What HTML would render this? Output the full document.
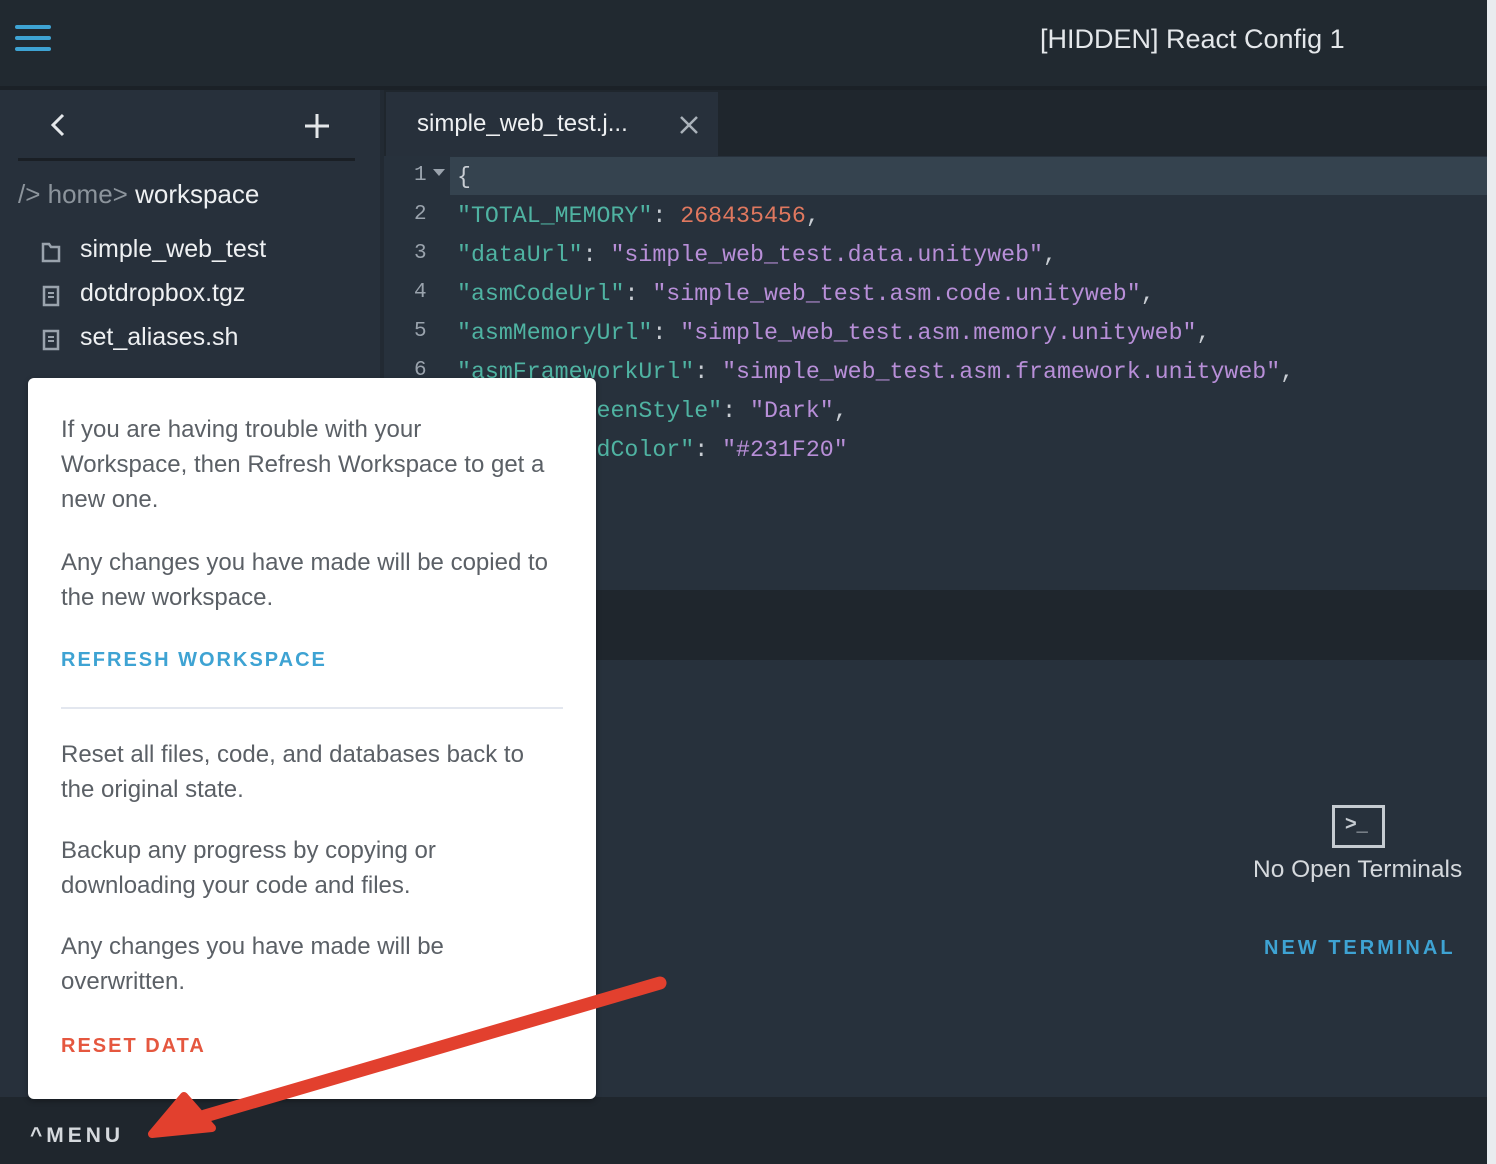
<!DOCTYPE html>
<html><head><meta charset="utf-8"><style>
*{margin:0;padding:0;box-sizing:border-box}
body{width:1496px;height:1164px;position:relative;overflow:hidden;background:#27303b;font-family:"Liberation Sans",sans-serif}
.abs{position:absolute}
.code{font-family:"Liberation Mono",monospace;font-size:23.25px;white-space:pre;color:#c9ced4}
.k{color:#4fb3a2}.s{color:#b88fd8}.n{color:#e0785f}
.ln{color:#9aa3ad;font-family:"Liberation Mono",monospace;font-size:21px}
.p{color:#5b6066;font-size:24px;line-height:35px;white-space:nowrap}
</style></head><body>
<div class="abs" style="left:0;top:0;width:1487px;height:88px;background:#212930"></div>
<div class="abs" style="left:0;top:86px;width:1487px;height:4px;background:#1b2127"></div>
<div class="abs" style="left:15px;top:25px;width:36px;height:4px;background:#3ea3d3;border-radius:2px"></div>
<div class="abs" style="left:15px;top:36px;width:36px;height:4px;background:#3ea3d3;border-radius:2px"></div>
<div class="abs" style="left:15px;top:47px;width:36px;height:4px;background:#3ea3d3;border-radius:2px"></div>
<div class="abs" style="left:1040px;top:24px;color:#e4e7ea;font-size:27px">[HIDDEN] React Config 1</div>
<div class="abs" style="left:1487px;top:0;width:9px;height:1164px;background:#e9ecef"></div>
<div class="abs" style="left:0;top:90px;width:380px;height:1010px;background:#27303b"></div>
<div class="abs" style="left:380px;top:90px;width:4px;height:1010px;background:#222a33"></div>
<svg class="abs" style="left:48px;top:112px" width="20" height="26"><path d="M15 3 L5 13 L15 23" stroke="#e4e7ea" stroke-width="3" fill="none"/></svg>
<svg class="abs" style="left:303px;top:112px" width="28" height="28"><path d="M14 2V26M2 14H26" stroke="#e4e7ea" stroke-width="3"/></svg>
<div class="abs" style="left:18px;top:158px;width:337px;height:3px;background:#1a1f25"></div>
<div class="abs" style="left:18px;top:179px;font-size:26px;color:#8c949c">/&gt; home&gt; <span style="color:#eef0f2">workspace</span></div>
<svg class="abs" style="left:40px;top:240px" width="22" height="24"><path d="M3 4H9L11 7H19V21H3Z" stroke="#9aa3ad" stroke-width="2.5" fill="none"/></svg>
<div class="abs" style="left:80px;top:235px;font-size:25px;color:#eef0f2">simple_web_test</div>
<svg class="abs" style="left:40px;top:284px" width="22" height="24"><rect x="4" y="3" width="14" height="18" stroke="#9aa3ad" stroke-width="2.5" fill="none"/><path d="M8 9H14M8 13H14" stroke="#9aa3ad" stroke-width="2"/></svg>
<div class="abs" style="left:80px;top:279px;font-size:25px;color:#eef0f2">dotdropbox.tgz</div>
<svg class="abs" style="left:40px;top:328px" width="22" height="24"><rect x="4" y="3" width="14" height="18" stroke="#9aa3ad" stroke-width="2.5" fill="none"/><path d="M8 9H14M8 13H14" stroke="#9aa3ad" stroke-width="2"/></svg>
<div class="abs" style="left:80px;top:323px;font-size:25px;color:#eef0f2">set_aliases.sh</div>
<div class="abs" style="left:384px;top:90px;width:1103px;height:66px;background:#1f262d"></div>
<div class="abs" style="left:386px;top:92px;width:332px;height:64px;background:#27303b"></div>
<div class="abs" style="left:417px;top:110px;font-size:24px;color:#eef0f2">simple_web_test.j...</div>
<svg class="abs" style="left:678px;top:114px" width="22" height="22"><path d="M3 3L19 19M19 3L3 19" stroke="#aab2ba" stroke-width="2.5"/></svg>
<div class="abs" style="left:384px;top:156px;width:1103px;height:434px;background:#27313c"></div>
<div class="abs" style="left:450px;top:157px;width:1037px;height:38px;background:#35434f"></div>
<div class="abs ln" style="left:414px;top:164px">1</div>
<svg class="abs" style="left:433px;top:169px" width="12" height="8"><path d="M0 0H12L6 7Z" fill="#9aa3ad"/></svg>
<div class="abs ln" style="left:414px;top:203px">2</div>
<div class="abs ln" style="left:414px;top:242px">3</div>
<div class="abs ln" style="left:414px;top:281px">4</div>
<div class="abs ln" style="left:414px;top:320px">5</div>
<div class="abs ln" style="left:414px;top:359px">6</div>
<div class="abs code" style="left:457px;top:158px;line-height:39px">{
<span class="k">"TOTAL_MEMORY"</span>: <span class="n">268435456</span>,
<span class="k">"dataUrl"</span>: <span class="s">"simple_web_test.data.unityweb"</span>,
<span class="k">"asmCodeUrl"</span>: <span class="s">"simple_web_test.asm.code.unityweb"</span>,
<span class="k">"asmMemoryUrl"</span>: <span class="s">"simple_web_test.asm.memory.unityweb"</span>,
<span class="k">"asmFrameworkUrl"</span>: <span class="s">"simple_web_test.asm.framework.unityweb"</span>,
<span class="k">"splashScreenStyle"</span>: <span class="s">"Dark"</span>,
<span class="k">"backgroundColor"</span>: <span class="s">"#231F20"</span></div>
<div class="abs" style="left:384px;top:590px;width:1103px;height:70px;background:#1f262d"></div>
<div class="abs" style="left:384px;top:660px;width:1103px;height:437px;background:#27313c"></div>
<div class="abs" style="left:1332px;top:805px;width:53px;height:43px;border:3px solid #c5cbd1"></div>
<div class="abs" style="left:1345px;top:813px;color:#c5cbd1;font-size:20px;font-weight:bold">&gt;_</div>
<div class="abs" style="left:1253px;top:856px;font-size:24.5px;color:#d5d9dd">No Open Terminals</div>
<div class="abs" style="left:1264px;top:937px;font-size:20px;color:#3ea3d3;font-weight:bold;letter-spacing:3px">NEW TERMINAL</div>
<div class="abs" style="left:0;top:1097px;width:1487px;height:67px;background:#1f262d"></div>
<div class="abs" style="left:30px;top:1124px;font-size:21px;color:#d5d9dd;font-weight:bold;letter-spacing:4px">^MENU</div>
<div class="abs" style="left:28px;top:378px;width:568px;height:721px;background:#fff;border-radius:6px;box-shadow:0 2px 6px rgba(0,0,0,.3)"></div>
<div class="abs p" style="left:61px;top:412px">If you are having trouble with your<br>Workspace, then Refresh Workspace to get a<br>new one.</div>
<div class="abs p" style="left:61px;top:545px">Any changes you have made will be copied to<br>the new workspace.</div>
<div class="abs" style="left:61px;top:649px;font-size:20px;color:#3ea3d3;font-weight:bold;letter-spacing:2px">REFRESH WORKSPACE</div>
<div class="abs" style="left:61px;top:707px;width:502px;height:2px;background:#e3e7ef"></div>
<div class="abs p" style="left:61px;top:737px">Reset all files, code, and databases back to<br>the original state.</div>
<div class="abs p" style="left:61px;top:833px">Backup any progress by copying or<br>downloading your code and files.</div>
<div class="abs p" style="left:61px;top:929px">Any changes you have made will be<br>overwritten.</div>
<div class="abs" style="left:61px;top:1035px;font-size:20px;color:#e5573f;font-weight:bold;letter-spacing:2px">RESET DATA</div>
<svg class="abs" style="left:0;top:0" width="1496" height="1164">
<path d="M660 983 L205 1116" stroke="#e2402e" stroke-width="13" stroke-linecap="round"/>
<path d="M152 1134 L184 1096 L212 1128 Z" fill="#e2402e" stroke="#e2402e" stroke-width="8" stroke-linejoin="round"/>
</svg>
</body></html>
